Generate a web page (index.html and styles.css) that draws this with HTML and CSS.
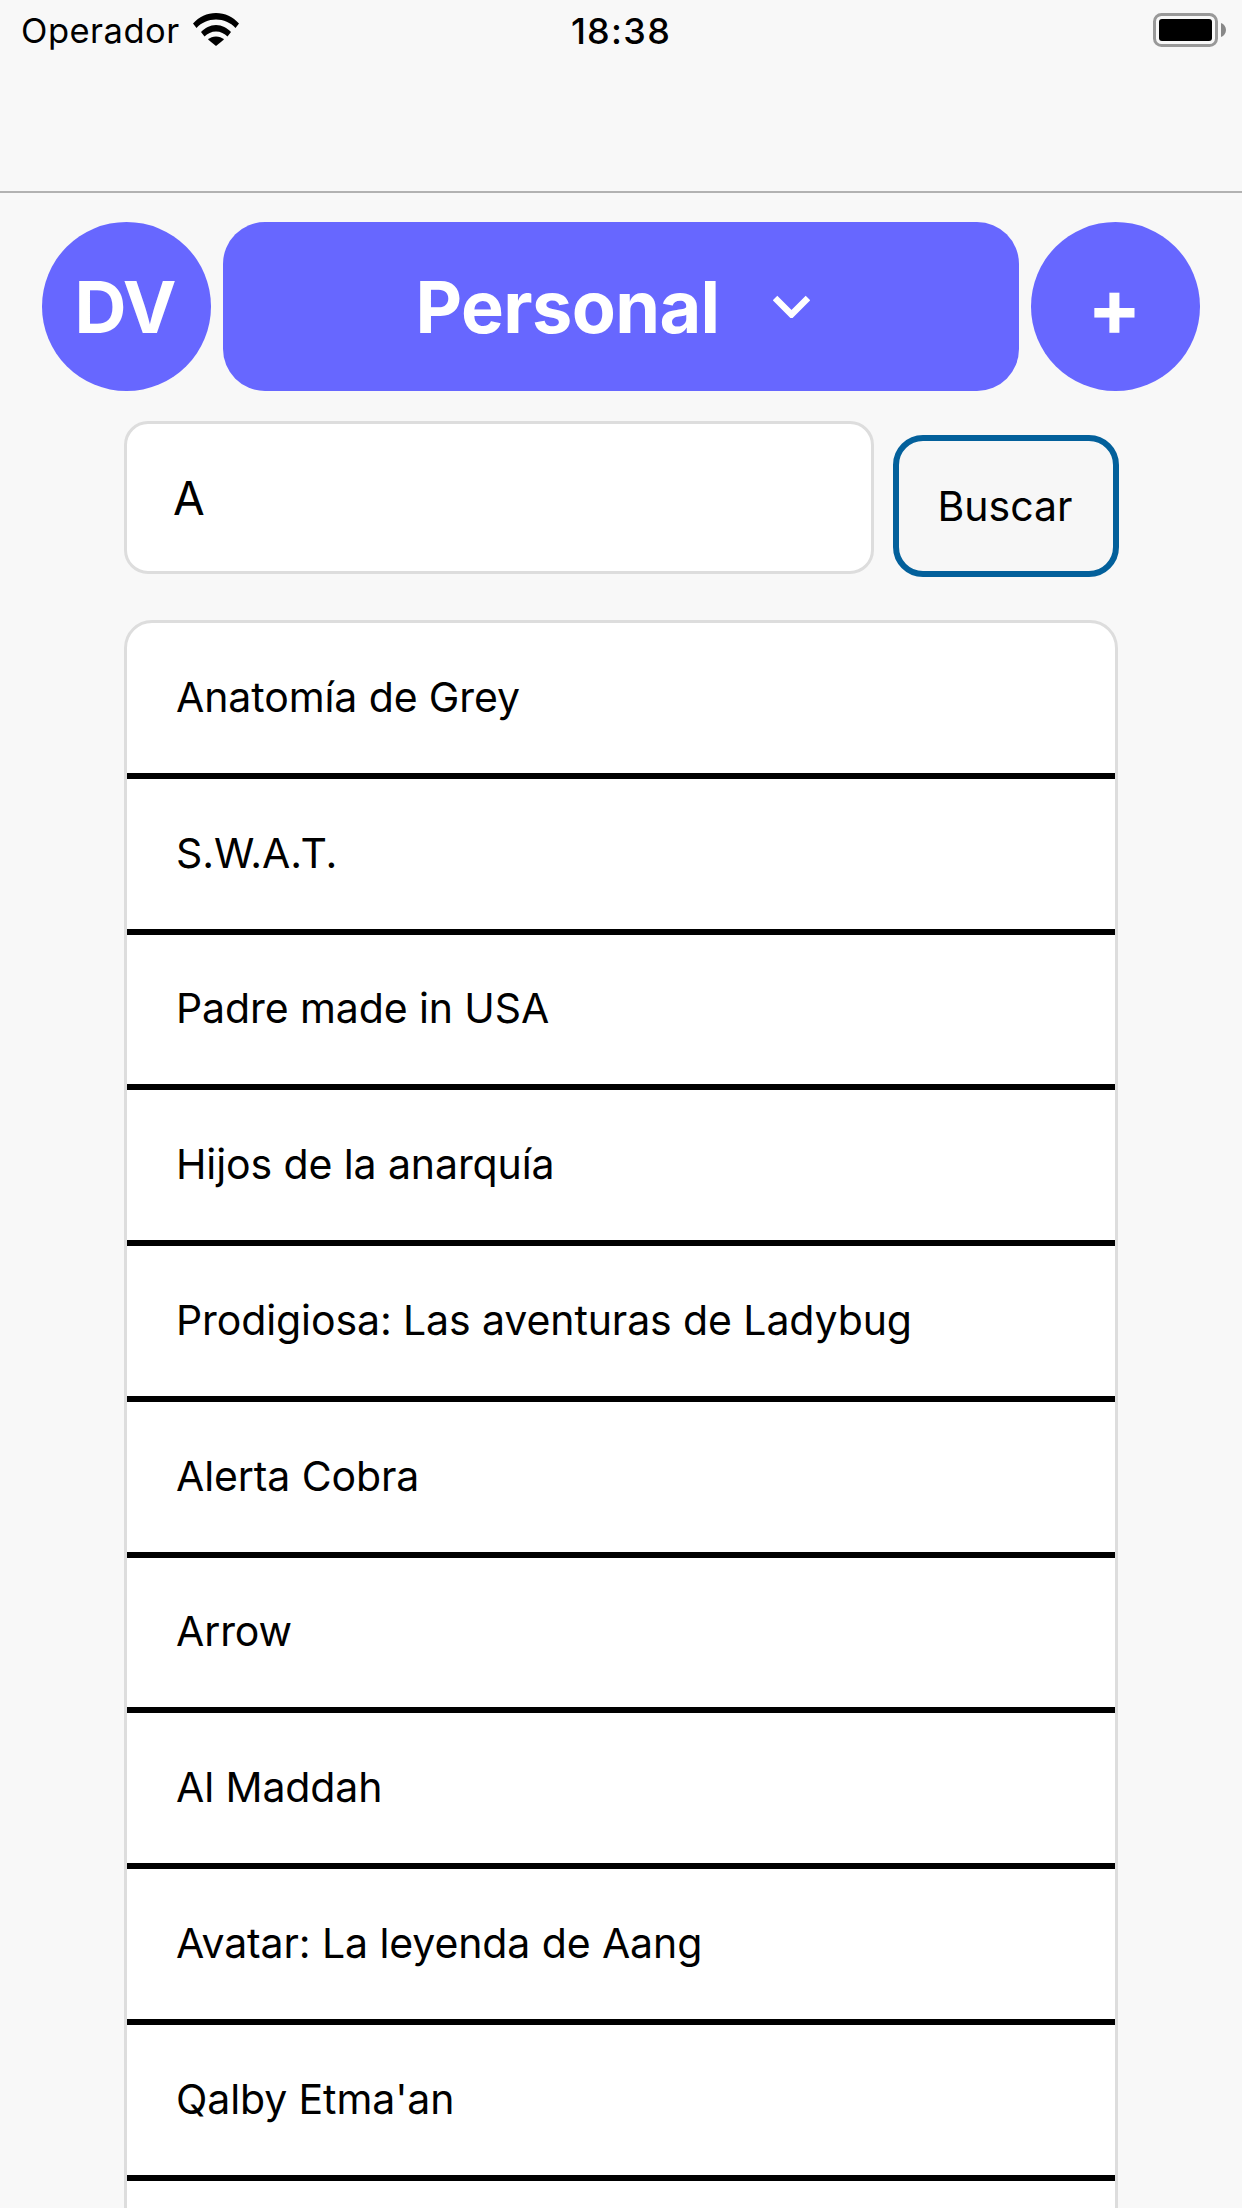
FILE: index.html
```html
<!DOCTYPE html>
<html lang="es">
<head>
    <meta charset="UTF-8">
    <title>Buscar</title>
    <link rel="stylesheet" href="styles.css">
</head>
<body>
    <header class="top-bar">
        <div class="status-bar">
            <div class="status-left">
                <span class="carrier">Operador</span>
                <svg class="wifi" width="46" height="33" viewBox="0 0 46 33">
                    <path d="M0 10.500C6 4 14 0 23 0S40 4 46 10.500L42.500 15C37.500 9.500 30.500 6.500 23 6.500S8.500 9.500 3.500 15Z"/>
                    <path d="M8 19C12 15 17 12 23 12S34 15 38 19L34.500 23.500C31.500 20.500 27.500 18.500 23 18.500S14.500 20.500 11.500 23.500Z"/>
                    <path d="M15 26.500C17 24.700 20 23.500 23 23.500S29 24.700 31 26.500L23 33Z"/>
                </svg>
            </div>
            <span class="clock">18:38</span>
            <svg class="battery" width="73" height="34" viewBox="0 0 73 34">
                <rect x="1.500" y="1.500" width="62" height="31" rx="7" fill="none" stroke="#999" stroke-width="3"/>
                <rect x="6" y="6" width="53" height="22" rx="3"/>
                <path d="M68 10C71 11 73 14 73 17S71 23 68 24Z" fill="#888"/>
            </svg>
        </div>
    </header>

    <main class="content">
        <div class="profile-row">
            <div class="round-button">DV</div>
            <div class="list-picker">
                <span class="list-name">Personal</span>
                <svg class="chevron" width="37" height="23" viewBox="0 0 37 23">
                    <path d="M2 3L18.500 19.500L35 3" fill="none" stroke="#fff" stroke-width="6.500"/>
                </svg>
            </div>
            <div class="round-button add-button">+</div>
        </div>

        <div class="search-row">
            <input class="search-input" type="text" value="A">
            <button class="search-button">Buscar</button>
        </div>

        <ul class="results">
            <li>Anatomía de Grey</li>
            <li>S.W.A.T.</li>
            <li>Padre made in USA</li>
            <li>Hijos de la anarquía</li>
            <li>Prodigiosa: Las aventuras de Ladybug</li>
            <li>Alerta Cobra</li>
            <li>Arrow</li>
            <li>Al Maddah</li>
            <li>Avatar: La leyenda de Aang</li>
            <li>Qalby Etma'an</li>
            <li></li>
        </ul>
    </main>
</body>
</html>
```

FILE: styles.css
```css
html, body {
    margin: 0;
    padding: 0;
    height: 2208px;
    overflow: hidden;
}
body {
    background-color: #f8f8f8;
    color: #000;
    font-family: "Inter", "Liberation Sans", sans-serif;
}
.top-bar {
    height: 193px;
    box-sizing: border-box;
    border-bottom: 2px solid #b2b2b2;
}
.status-bar {
    display: flex;
    align-items: flex-start;
    justify-content: space-between;
    padding: 13px 16px 0 21px;
    position: relative;
}
.status-left {
    display: flex;
    align-items: flex-start;
    gap: 13px;
}
.carrier {
    font-size: 34.500px;
    letter-spacing: 0.5px;
    line-height: 36px;
}
.clock {
    font-size: 36px;
    font-weight: 500;
    letter-spacing: 1.3px;
    line-height: 36px;
    position: absolute;
    top: 13px;
    left: 0;
    right: 0;
    text-align: center;
}
.profile-row {
    display: flex;
    gap: 12px;
    padding: 29px 42px 0;
}
.round-button {
    width: 169px;
    height: 169px;
    flex: none;
    box-sizing: border-box;
    padding-right: 3px;
    border-radius: 50%;
    background-color: #6767ff;
    color: #fff;
    font-size: 72px;
    font-weight: 700;
    letter-spacing: -1px;
    display: flex;
    align-items: center;
    justify-content: center;
}
.add-button {
    font-size: 80px;
    letter-spacing: 0;
    padding-right: 2px;
}
.list-picker {
    flex: 1;
    height: 169px;
    box-sizing: border-box;
    padding-right: 17px;
    border-radius: 42px;
    background-color: #6767ff;
    color: #fff;
    display: flex;
    align-items: center;
    justify-content: center;
    gap: 53px;
}
.list-name {
    font-size: 72px;
    font-weight: 700;
    letter-spacing: -0.6px;
}
.search-row {
    display: flex;
    align-items: flex-start;
    gap: 19px;
    margin: 30px 0 0 124px;
}
.search-input {
    width: 750px;
    height: 153px;
    box-sizing: border-box;
    border: 3px solid #ddd;
    border-radius: 24px;
    background-color: #fff;
    padding: 0 46px;
    margin: 0;
    font-family: inherit;
    font-size: 46px;
    color: #000;
    outline: none;
}
.search-button {
    width: 226px;
    height: 142px;
    margin-top: 14px;
    box-sizing: border-box;
    border: 6px solid #03609b;
    border-radius: 30px;
    background-color: #f7f7f7;
    font-family: inherit;
    font-size: 41px;
    color: #000;
    padding: 0 2px 0 0;
}
.results {
    list-style: none;
    width: 994px;
    box-sizing: border-box;
    margin: 43px 0 0 124px;
    padding: 0;
    border: 3px solid #ddd;
    border-radius: 28px;
    background-color: #fff;
    overflow: hidden;
}
.results li {
    height: 155.75px;
    box-sizing: border-box;
    border-bottom: 6px solid #000;
    padding: 0 0 2px 49px;
    font-size: 41px;
    letter-spacing: -0.1px;
    display: flex;
    align-items: center;
}
```
